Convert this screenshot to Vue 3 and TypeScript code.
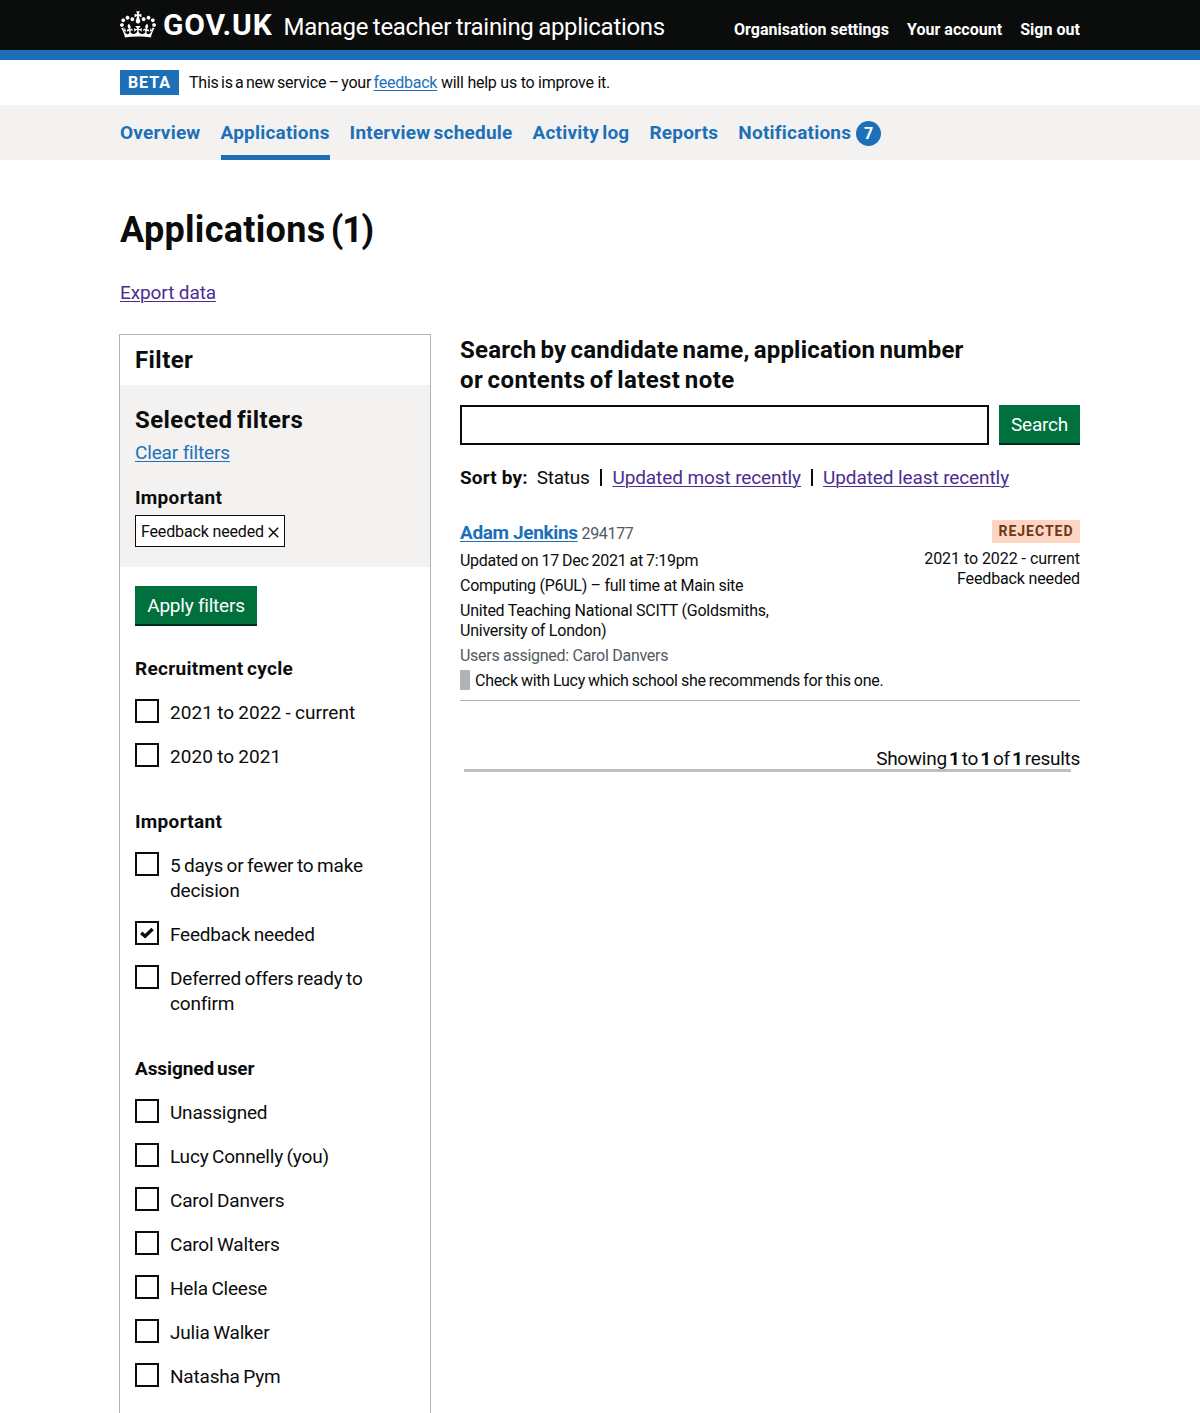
<script setup lang="ts">
import { ref } from 'vue'

interface NavItem {
  label: string
  key: string
  count?: number
}

interface Option {
  label: string
  checked: boolean
}

interface FilterGroup {
  heading: string
  key: string
  options: Option[]
}

const accountLinks = ['Organisation settings', 'Your account', 'Sign out']

const navItems: NavItem[] = [
  { label: 'Overview', key: 'overview' },
  { label: 'Applications', key: 'applications' },
  { label: 'Interview schedule', key: 'interviews' },
  { label: 'Activity log', key: 'activity' },
  { label: 'Reports', key: 'reports' },
  { label: 'Notifications', key: 'notifications', count: 7 },
]
const current = 'applications'

const option = (label: string, checked = false): Option => ({ label, checked })

const groups = ref<FilterGroup[]>([
  {
    heading: 'Recruitment cycle',
    key: 'cycle',
    options: [option('2021 to 2022 - current'), option('2020 to 2021')],
  },
  {
    heading: 'Important',
    key: 'important',
    options: [
      option('5 days or fewer to make decision'),
      option('Feedback needed', true),
      option('Deferred offers ready to confirm'),
    ],
  },
  {
    heading: 'Assigned user',
    key: 'user',
    options: [
      option('Unassigned'),
      option('Lucy Connelly (you)'),
      option('Carol Danvers'),
      option('Carol Walters'),
      option('Hela Cleese'),
      option('Julia Walker'),
      option('Natasha Pym'),
    ],
  },
])

const query = ref('')
</script>

<template>
  <div class="page">
    <header class="header">
      <div class="container header-row">
        <a class="brand" href="#">
          <svg class="crown" viewBox="0 0 132 97" width="36" height="27" aria-hidden="true">
            <path
              fill="currentColor"
              fill-rule="evenodd"
              d="M25 30.2c3.5 1.5 7.7-.2 9.1-3.7 1.5-3.6-.2-7.8-3.9-9.2-3.6-1.4-7.6.3-9.1 3.9-1.4 3.5.3 7.5 3.9 9zM9 39.5c3.6 1.5 7.8-.2 9.2-3.7 1.5-3.6-.2-7.8-3.9-9.1-3.6-1.5-7.6.2-9.1 3.8-1.4 3.5.3 7.5 3.8 9zM4.4 57.2c3.5 1.5 7.7-.2 9.1-3.8 1.5-3.6-.2-7.7-3.9-9.1-3.5-1.5-7.6.3-9.1 3.8-1.4 3.5.3 7.6 3.9 9.1zm38.3-21.4c3.5 1.5 7.7-.2 9.1-3.8 1.5-3.6-.2-7.7-3.9-9.1-3.6-1.5-7.6.3-9.1 3.8-1.3 3.6.4 7.7 3.9 9.1zm64.4-5.6c-3.6 1.5-7.8-.2-9.1-3.7-1.5-3.6.2-7.8 3.8-9.2 3.6-1.4 7.7.3 9.2 3.9 1.3 3.5-.4 7.5-3.9 9zm15.9 9.3c-3.6 1.5-7.7-.2-9.1-3.7-1.5-3.6.2-7.8 3.7-9.1 3.6-1.5 7.7.2 9.2 3.8 1.5 3.5-.3 7.5-3.8 9zm4.7 17.7c-3.6 1.5-7.8-.2-9.2-3.8-1.5-3.6.2-7.7 3.9-9.1 3.6-1.5 7.7.3 9.2 3.8 1.3 3.5-.4 7.6-3.9 9.1zM89.3 35.8c-3.6 1.5-7.8-.2-9.2-3.8-1.4-3.6.2-7.7 3.9-9.1 3.6-1.5 7.7.3 9.2 3.8 1.4 3.6-.3 7.7-3.9 9.1zM69.7 17.7l8.9 4.7V9.3l-8.9 2.8c-.2-.3-.5-.6-.9-.9L72.4 0H59.6l3.5 11.2c-.3.3-.6.5-.9.9l-8.8-2.8v13.1l8.8-4.7c.3.3.6.7.9.9l-5 15.4v.1c-.2.8-.4 1.6-.4 2.4 0 4.1 3.1 7.5 7 8.1h.2c.3 0 .7.1 1 .1.4 0 .7 0 1-.1h.2c4-.6 7.1-4.1 7.1-8.1 0-.8-.1-1.7-.4-2.4V34l-5.1-15.4c.4-.2.7-.6 1-.9zM66 92.8c16.9 0 32.8 1.1 47.1 3.2 4-16.9 8.9-26.7 14-33.5l-9.6-3.4c1 4.9 1.1 7.2 0 10.2-1.5-1.4-3-4.3-4.2-8.7L108.6 76c2.8-2 5-3.2 7.5-3.3-4.4 9.4-10 11.9-13.6 11.2-4.3-.8-6.3-4.6-5.6-7.9 1-4.7 5.7-5.9 8-.5 4.3-8.7-3-11.4-7.6-8.8 7.1-7.2 7.9-13.5 2.1-21.1-8 6.1-8.1 12.3-4.5 20.8-4.7-5.4-12.1-2.5-9.5 6.2 3.4-5.2 7.9-2 7.2 3.1-.6 4.3-6.4 7.8-13.5 7.2-10.3-.9-10.9-8-11.2-13.8 2.5-.5 7.1 1.8 11 7.3L80.2 60c-4.1 4.4-8 5.3-12.3 5.4 1.4-4.4 8-11.6 8-11.6H55.5s6.4 7.2 7.9 11.6c-4.2-.1-8-1-12.3-5.4l1.4 16.4c3.9-5.5 8.5-7.7 10.9-7.3-.3 5.8-.9 12.8-11.1 13.8-7.2.6-12.9-2.9-13.5-7.2-.7-5 3.8-8.3 7.1-3.1 2.7-8.7-4.6-11.6-9.4-6.2 3.7-8.5 3.6-14.7-4.6-20.8-5.8 7.6-5 13.9 2.2 21.1-4.7-2.6-11.9.1-7.7 8.8 2.3-5.5 7.1-4.2 8.1.5.7 3.3-1.3 7.1-5.7 7.9-3.5.7-9-1.8-13.5-11.2 2.5.1 4.7 1.3 7.5 3.3l-4.7-15.4c-1.2 4.4-2.7 7.2-4.3 8.7-1.1-3-.9-5.3 0-10.2l-9.5 3.4c5 6.9 9.9 16.7 14 33.5 14.8-2.1 30.8-3.2 47.7-3.2z"
            />
          </svg>
          <span class="logotype">GOV.UK</span>
          <span class="product">Manage teacher training applications</span>
        </a>
        <nav class="account">
          <a v-for="link in accountLinks" :key="link" href="#">{{ link }}</a>
        </nav>
      </div>
    </header>

    <div class="container phase">
      <strong class="phase-tag">BETA</strong>
      <span class="phase-text"><span class="phase-intro">This is a new service – your </span><a class="link" href="#">feedback</a> will help us to improve it.</span>
    </div>

    <div class="nav-bar">
      <nav class="container nav">
        <a
          v-for="item in navItems"
          :key="item.key"
          :class="['nav-item', { current: item.key === current }]"
          href="#"
        ><span>{{ item.label }}</span><span v-if="item.count" class="count">{{ item.count }}</span></a>
      </nav>
    </div>

    <main class="container main">
      <h1 class="title">Applications <span class="total">(1)</span></h1>
      <p class="export"><a class="link visited" href="#">Export data</a></p>

      <div class="columns">
        <aside class="filter">
          <div class="filter-head"><h2 class="h-m">Filter</h2></div>
          <div class="selected">
            <h2 class="h-m">Selected filters</h2>
            <p class="clear"><a class="link" href="#">Clear filters</a></p>
            <h3 class="h-s">Important</h3>
            <a class="chip" href="#"><span>Feedback needed</span>
              <svg width="11" height="11" viewBox="0 0 11 11" aria-hidden="true">
                <path d="M0.8 0.8L10.2 10.2M10.2 0.8L0.8 10.2" stroke="currentColor" stroke-width="1.5" />
              </svg>
            </a>
          </div>
          <form class="options" @submit.prevent>
            <button class="button apply">Apply filters</button>
            <fieldset v-for="group in groups" :key="group.key" :class="['group', `group-${group.key}`]">
              <h3 class="h-s">{{ group.heading }}</h3>
              <label v-for="opt in group.options" :key="opt.label" class="option">
                <input v-model="opt.checked" class="native" type="checkbox" />
                <span class="box">
                  <svg v-if="opt.checked" width="14" height="12" viewBox="0 0 14 12" aria-hidden="true">
                    <path d="M1.2 5.9L5.1 9.3L12.6 2" fill="none" stroke="currentColor" stroke-width="3.4" />
                  </svg>
                </span>
                <span class="option-text">{{ opt.label }}</span>
              </label>
            </fieldset>
          </form>
        </aside>

        <section class="results">
          <form @submit.prevent>
            <label class="h-m search-label" for="q">
              <span>Search by candidate name, application number</span>
              <span class="second-line">or contents of latest note</span>
            </label>
            <div class="search-row">
              <input id="q" v-model="query" class="search-input" type="text" />
              <button class="button find">Search</button>
            </div>
          </form>

          <div class="sort">
            <strong class="sort-label">Sort by:</strong>
            <span class="sort-current">Status</span>
            <i class="divider"></i>
            <a class="link visited" href="#">Updated most recently</a>
            <i class="divider"></i>
            <a class="link visited" href="#">Updated least recently</a>
          </div>

          <article class="card">
            <div class="card-top">
              <div class="card-main">
                <h3 class="name"><a class="link" href="#">Adam Jenkins</a><span class="ref">294177</span></h3>
                <p class="updated">Updated on 17 Dec 2021 at 7:19pm</p>
                <p>Computing (P6UL) – full time at Main site</p>
                <p class="provider">United Teaching National SCITT (Goldsmiths,<br />University of London)</p>
                <p class="muted">Users assigned: Carol Danvers</p>
              </div>
              <div class="card-side">
                <strong class="status">REJECTED</strong>
                <p class="cycle-text">2021 to 2022 - current</p>
                <p class="need">Feedback needed</p>
              </div>
            </div>
            <p class="note">Check with Lucy which school she recommends for this one.</p>
          </article>

          <p class="showing">Showing <b>1</b> to <b>1</b> of <b>1</b> results</p>
          <div class="rule"></div>
        </section>
      </div>
    </main>
  </div>
</template>

<style>
body {
  margin: 0;
  background: #fff;
  overflow: hidden;
}
</style>

<style scoped>
.page {
  height: 1413px;
  overflow: hidden;
  color: #0b0c0c;
  font: 400 19px/25px Roboto, "Liberation Sans", sans-serif;
  letter-spacing: -0.28px;
}
.page *,
.page *::before {
  box-sizing: border-box;
}
h1, h2, h3, p, fieldset {
  margin: 0;
  padding: 0;
  border: 0;
  min-width: 0;
}
a {
  color: inherit;
  text-decoration: none;
}
.link {
  color: #1d70b8;
  text-decoration: underline;
  text-decoration-thickness: 1px;
  text-underline-offset: 2px;
}
.link.visited {
  color: #4c2c92;
  letter-spacing: -0.1px;
}
.container {
  width: 960px;
  margin: 0 auto;
}
.h-m {
  display: block;
  font-size: 24px;
  line-height: 30px;
  font-weight: 700;
  letter-spacing: 0.42px;
  word-spacing: -2px;
}
.h-s {
  font-size: 19px;
  line-height: 25px;
  font-weight: 700;
  letter-spacing: 0.3px;
  word-spacing: -1.5px;
}

.header {
  height: 60px;
  background: #0b0c0c;
  border-bottom: 10px solid #1d70b8;
  color: #fff;
}
.header-row {
  display: flex;
  justify-content: space-between;
}
.brand {
  display: flex;
  white-space: nowrap;
}
.crown {
  margin-top: 11px;
}
.logotype {
  margin: 7px 0 0 7px;
  width: 120.5px;
  font-size: 30px;
  line-height: 35px;
  font-weight: 700;
  letter-spacing: 0.8px;
}
.product {
  margin-top: 12px;
  font-size: 24px;
  line-height: 30px;
  letter-spacing: -0.3px;
  word-spacing: -1px;
}
.account {
  display: flex;
  gap: 18px;
  margin-top: 20px;
  font-size: 16px;
  line-height: 20px;
  font-weight: 700;
  letter-spacing: 0.03px;
}

.phase {
  display: flex;
  align-items: center;
  height: 45px;
  font-size: 16px;
  line-height: 20px;
}
.phase-tag {
  width: 59px;
  height: 25px;
  margin-right: 10px;
  background: #1d70b8;
  color: #fff;
  line-height: 25px;
  text-align: center;
  letter-spacing: 1px;
}
.phase-text {
  padding-top: 1px;
  letter-spacing: -0.24px;
}
.phase-intro {
  word-spacing: -1.3px;
}

.nav-bar {
  background: #f3f2f1;
}
.nav {
  display: flex;
  gap: 20px;
  height: 55px;
}
.nav-item {
  display: flex;
  padding-top: 15px;
  color: #1d70b8;
  font-weight: 700;
  letter-spacing: 0.21px;
  word-spacing: -1.7px;
}
.nav-item.current {
  border-bottom: 5px solid #1d70b8;
}
.count {
  width: 25px;
  height: 25px;
  margin: 1px 0 0 5px;
  border-radius: 50%;
  background: #1d70b8;
  color: #fff;
  font-size: 16px;
  line-height: 25px;
  text-align: center;
}

.main {
  padding-top: 50px;
}
.title {
  font-size: 36px;
  line-height: 40px;
  font-weight: 700;
  letter-spacing: 0.3px;
  word-spacing: -4px;
}
.total {
  letter-spacing: -1.2px;
}
.export {
  margin-top: 30px;
}
.columns {
  display: flex;
  gap: 29px;
  margin: 29px 0 0 -1px;
}

.filter {
  width: 312px;
  height: 1200px;
  border: 1px solid #b1b4b6;
}
.filter-head {
  padding: 10px 15px;
}
.selected {
  padding: 20px 15px;
  background: #f3f2f1;
}
.clear {
  margin: 5px 0 20px;
  letter-spacing: -0.15px;
}
.chip {
  display: flex;
  align-items: center;
  justify-content: space-between;
  width: 150px;
  height: 32px;
  margin-top: 5px;
  padding: 2px 5px 0;
  border: 1px solid #0b0c0c;
  background: #fff;
  font-size: 16px;
  line-height: 20px;
  letter-spacing: -0.15px;
}
.options {
  padding: 19px 15px;
}
.button {
  display: block;
  height: 40px;
  padding: 0 0 2px;
  border: 0;
  background: #00703c;
  box-shadow: inset 0 -2px 0 #002d18;
  color: #fff;
  font: inherit;
  letter-spacing: -0.22px;
  text-align: center;
}
.apply {
  width: 122px;
  margin-bottom: 30px;
}
.group {
  margin-bottom: 40px;
}
.group-user .h-s {
  letter-spacing: -0.1px;
}
.option {
  display: flex;
  margin-top: 19px;
  letter-spacing: -0.2px;
  word-spacing: -0.9px;
}
.group-cycle .option {
  letter-spacing: 0.06px;
  word-spacing: -0.6px;
}
.native {
  position: absolute;
  opacity: 0;
}
.box {
  display: flex;
  align-items: center;
  justify-content: center;
  flex: none;
  width: 24px;
  height: 24px;
  margin: -1px 11px 0 0;
  border: 2px solid #0b0c0c;
}
.option-text {
  max-width: 205px;
}

.results {
  width: 620px;
  padding-top: 1px;
}
.search-label {
  letter-spacing: 0.2px;
}
.search-label span {
  display: block;
}
.search-label .second-line {
  letter-spacing: 0.42px;
}
.search-row {
  display: flex;
  gap: 10px;
  margin-top: 10px;
}
.search-input {
  flex: 1;
  height: 40px;
  padding: 5px;
  border: 2px solid #0b0c0c;
  border-radius: 0;
  background: #fff;
  font: inherit;
}
.find {
  width: 81px;
}
.sort {
  display: flex;
  align-items: center;
  height: 25px;
  margin-top: 20px;
  white-space: nowrap;
}
.sort-label {
  margin-right: 9px;
  letter-spacing: 0.16px;
}
.sort-current {
  margin-right: 1px;
}
.divider {
  width: 2px;
  height: 17px;
  margin: -1px 10px 0;
  background: #0b0c0c;
}

.card {
  margin-top: 30px;
  height: 181px;
  border-bottom: 1px solid #b1b4b6;
  font-size: 16px;
  line-height: 20px;
}
.card-top {
  display: flex;
  justify-content: space-between;
}
.card-main p {
  margin-top: 5px;
}
.name {
  height: 26px;
  font-size: 19px;
  line-height: 25px;
  font-weight: 700;
  letter-spacing: -0.36px;
}
.ref {
  margin-left: 4px;
  color: #505a5f;
  font-size: 16px;
  font-weight: 400;
}
.updated {
  word-spacing: -0.6px;
}
.provider {
  letter-spacing: -0.24px;
}
.card-main .muted {
  color: #505a5f;
}
.card-side {
  display: flex;
  flex-direction: column;
  align-items: flex-end;
}
.status {
  width: 88px;
  height: 23px;
  margin-bottom: 6px;
  background: #fcd6c3;
  color: #6e3619;
  font-size: 14px;
  line-height: 23px;
  text-align: center;
  letter-spacing: 1px;
}
.cycle-text {
  letter-spacing: -0.05px;
}
.need {
  letter-spacing: -0.15px;
}
.note {
  height: 20px;
  margin-top: 4px;
  padding: 1px 0 0 5px;
  border-left: 10px solid #b1b4b6;
  word-spacing: -0.5px;
}
.showing {
  margin-top: 45px;
  text-align: right;
  word-spacing: -2.3px;
}
.rule {
  width: 607px;
  height: 3px;
  margin: -2px 0 0 4px;
  background: #bfbfbf;
}
</style>
